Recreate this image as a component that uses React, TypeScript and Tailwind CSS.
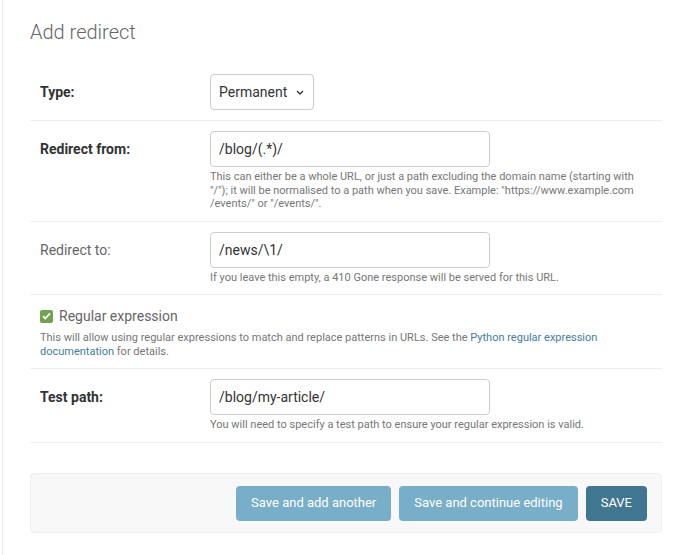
import React from "react"

function Help({ children, className = "" }: { children: React.ReactNode; className?: string }) {
  return <div className={`mt-[3px] text-[11px] leading-[13.5px] text-[#777] ${className}`}>{children}</div>
}

function TextInput({ value }: { value: string }) {
  return (
    <input
      readOnly
      value={value}
      className="h-[36px] w-[280px] rounded-[4px] border border-[#ccc] bg-white px-2 text-sm text-[#333] outline-none"
    />
  )
}

function Row({ label, bold = true, children }: { label: string; bold?: boolean; children: React.ReactNode }) {
  return (
    <div className="flex border-b border-[#eee] p-[10px]">
      <div
        className={`flex h-[36px] w-[170px] shrink-0 items-center pr-[10px] text-sm ${bold ? "font-bold text-[#333]" : "text-[#666]"}`}
      >
        {label}
      </div>
      <div>{children}</div>
    </div>
  )
}

export default function App() {
  return (
    <div className="min-h-screen bg-white pl-[2px] font-['Roboto','Liberation_Sans',sans-serif]">
      <div className="min-h-[555px] border-l border-[#eee] pl-[27px] pr-[30px] pt-5">
        <h1 className="mb-5 text-[20px] font-light leading-6 text-[#666]">Add redirect</h1>

        <div>
          <Row label="Type:">
            <div className="relative w-[104px]">
              <select className="h-[36px] w-full appearance-none rounded-[4px] border border-[#ccc] bg-white pl-2 text-sm text-[#333] outline-none">
                <option>Permanent</option>
              </select>
              <svg
                className="pointer-events-none absolute right-[10px] top-[16px]"
                width="8"
                height="5"
                viewBox="0 0 8 5"
                fill="none"
                stroke="#333"
                strokeWidth="1.3"
              >
                <path d="M1 1l3 3 3-3" />
              </svg>
            </div>
          </Row>

          <Row label="Redirect from:">
            <TextInput value="/blog/(.*)/" />
            <Help>
              This can either be a whole URL, or just a path excluding the domain name (starting with
              <br />
              "/"); it will be normalised to a path when you save. Example: "https://www.example.com
              <br />
              /events/" or "/events/".
            </Help>
          </Row>

          <Row label="Redirect to:" bold={false}>
            <TextInput value="/news/\1/" />
            <Help>If you leave this empty, a 410 Gone response will be served for this URL.</Help>
          </Row>

          <div className="border-b border-[#eee] p-[10px]">
            <div className="flex h-[22px] items-center gap-[6px] text-sm text-[#666]">
              <span className="flex h-[13px] w-[13px] items-center justify-center rounded-[2px] bg-[#72a14f]">
                <svg width="9" height="8" viewBox="0 0 9 8" fill="none" stroke="white" strokeWidth="1.8">
                  <path d="M1 4.2l2.3 2.3L8 1.3" />
                </svg>
              </span>
              Regular expression
            </div>
            <Help className="mt-[4px]">
              This will allow using regular expressions to match and replace patterns in URLs. See the{" "}
              <a className="text-[#447e9b]">Python regular expression</a>
              <br />
              <a className="text-[#447e9b]">documentation</a> for details.
            </Help>
          </div>

          <Row label="Test path:">
            <TextInput value="/blog/my-article/" />
            <Help>You will need to specify a test path to ensure your regular expression is valid.</Help>
          </Row>
        </div>

        <div className="mt-[30px] flex justify-end gap-[8px] rounded-[4px] border border-[#eee] bg-[#f8f8f8] px-[14px] pb-[11px] pt-[12px]">
          <button className="h-[35px] rounded-[4px] bg-[#79aec8] px-[15px] text-[13px] text-white">
            Save and add another
          </button>
          <button className="h-[35px] rounded-[4px] bg-[#79aec8] px-[15px] text-[13px] text-white">
            Save and continue editing
          </button>
          <button className="h-[35px] rounded-[4px] bg-[#417690] px-[15px] text-[13px] text-white">SAVE</button>
        </div>
      </div>
    </div>
  )
}
